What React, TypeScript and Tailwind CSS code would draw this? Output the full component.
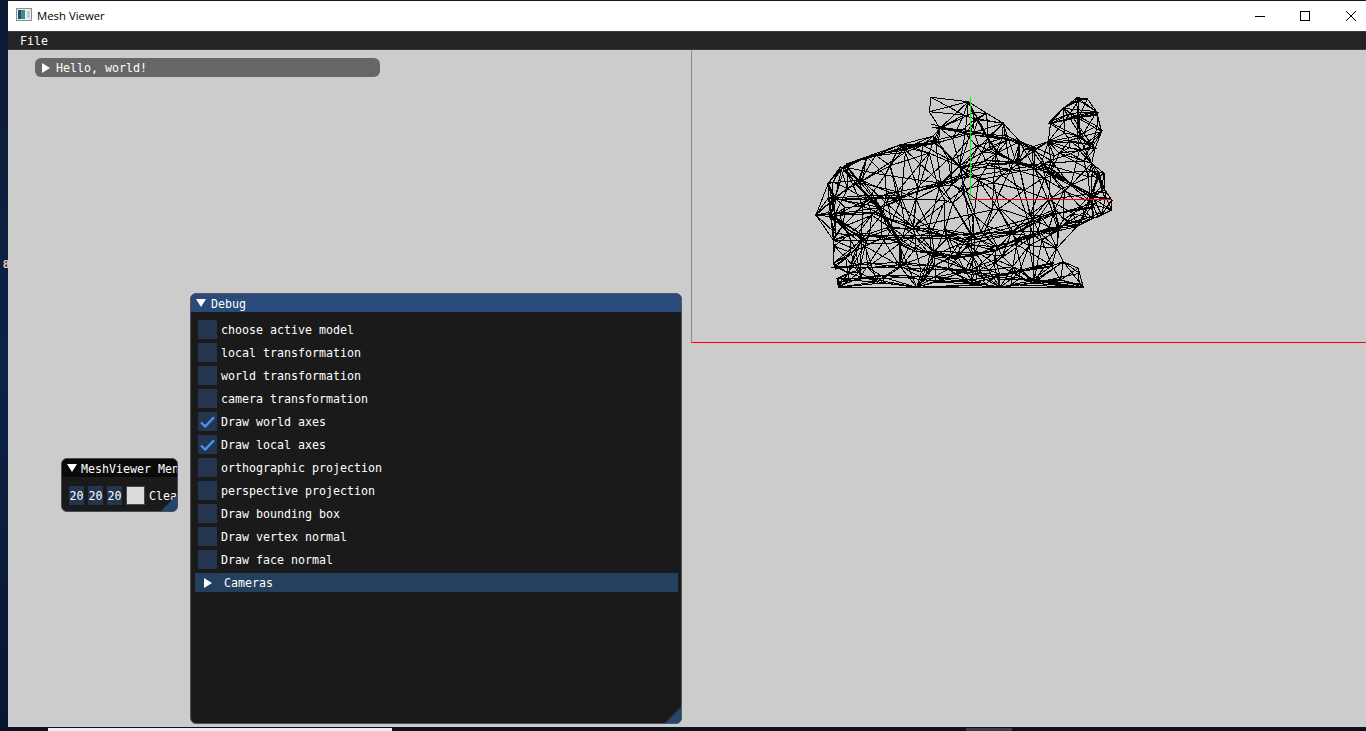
import type { ReactNode } from 'react'

type Pt = [number, number]

// all mesh coords below are read off a 3x crop whose origin is (800,85)
const fromCrop = ([x, y]: Pt): Pt => [800 + x / 3, 85 + y / 3]

const OUTLINE: Pt[] = ([
  [393, 37], [505, 50], [560, 85], [610, 115], [660, 170], [700, 185], [745, 170], [750, 110],
  [790, 70], [832, 38], [862, 42], [890, 80], [905, 140], [885, 190], [875, 235], [912, 265],
  [915, 315], [935, 345], [935, 375], [880, 400], [830, 425], [770, 490], [790, 530], [835, 550],
  [850, 607], [600, 607], [350, 607], [115, 607], [112, 580], [145, 565], [100, 535], [100, 465],
  [48, 390], [85, 295], [125, 250], [200, 215], [300, 180], [400, 153], [420, 130], [388, 80],
] as Pt[]).map(fromCrop)

// the dark bands of the wireframe, where many edges pile up
const BANDS: Pt[][] = [
  [[130, 250], [170, 290], [240, 370], [270, 430], [300, 470], [350, 495], [400, 510], [460, 515], [520, 510], [590, 490], [650, 470], [720, 445], [780, 430], [840, 410], [900, 390]],
  [[100, 550], [200, 540], [300, 540], [400, 550], [500, 560], [600, 575], [700, 590], [840, 600]],
  [[120, 585], [250, 575], [380, 580], [520, 590], [660, 560], [760, 540]],
  [[480, 250], [560, 235], [650, 230], [700, 245], [750, 260], [810, 295], [870, 330]],
  [[140, 240], [220, 210], [310, 195], [400, 170]],
  [[530, 100], [560, 150], [590, 200], [650, 230]],
  [[832, 40], [835, 100], [840, 160], [870, 180]],
  [[895, 270], [905, 300], [915, 330]],
  [[100, 340], [200, 340], [300, 340], [420, 300], [500, 270]],
  [[400, 125], [500, 140], [620, 160], [700, 190]],
  [[750, 110], [830, 95], [895, 90]],
  [[100, 385], [220, 390], [340, 430], [500, 470], [640, 440], [770, 380]],
  [[90, 390], [190, 460], [340, 460], [520, 450], [700, 400], [880, 360]],
].map((band) => (band as Pt[]).map(fromCrop))

function inside([px, py]: Pt) {
  let hit = false
  for (let i = 0, j = OUTLINE.length - 1; i < OUTLINE.length; j = i++) {
    const [xi, yi] = OUTLINE[i]
    const [xj, yj] = OUTLINE[j]
    if (yi > py !== yj > py && px < ((xj - xi) * (py - yi)) / (yj - yi) + xi) hit = !hit
  }
  return hit
}

function seeded(seed: number) {
  let s = seed
  return () => {
    s = (s + 0x6d2b79f5) | 0
    let t = Math.imul(s ^ (s >>> 15), 1 | s)
    t = (t + Math.imul(t ^ (t >>> 7), 61 | t)) ^ t
    return ((t ^ (t >>> 14)) >>> 0) / 4294967296
  }
}

function delaunay(pts: Pt[]) {
  const all: Pt[] = [...pts, [-5000, -5000], [8000, -5000], [1000, 8000]]
  const n = pts.length
  let tris: number[][] = [[n, n + 1, n + 2]]
  const inCircle = (t: number[], p: Pt) => {
    const [a, b, c] = t.map((i) => all[i])
    const ax = a[0] - p[0], ay = a[1] - p[1]
    const bx = b[0] - p[0], by = b[1] - p[1]
    const cx = c[0] - p[0], cy = c[1] - p[1]
    const det =
      (ax * ax + ay * ay) * (bx * cy - cx * by) -
      (bx * bx + by * by) * (ax * cy - cx * ay) +
      (cx * cx + cy * cy) * (ax * by - bx * ay)
    const orient = (b[0] - a[0]) * (c[1] - a[1]) - (b[1] - a[1]) * (c[0] - a[0])
    return orient > 0 ? det > 0 : det < 0
  }
  pts.forEach((p, i) => {
    const bad = tris.filter((t) => inCircle(t, p))
    const edges = new Map<string, [number, number]>()
    bad.forEach((t) => {
      for (let k = 0; k < 3; k++) {
        const a = t[k], b = t[(k + 1) % 3]
        const key = a < b ? `${a}-${b}` : `${b}-${a}`
        if (edges.has(key)) edges.delete(key)
        else edges.set(key, [a, b])
      }
    })
    tris = tris.filter((t) => !bad.includes(t))
    edges.forEach(([a, b]) => tris.push([a, b, i]))
  })
  return tris.filter((t) => t.every((i) => i < n))
}

function layer(seed: number, count: number, bandStep: number) {
  const rand = seeded(seed)
  const pts: Pt[] = [...OUTLINE]
  BANDS.forEach((band) =>
    band.forEach((p, i) => {
      if (i % bandStep === 0) pts.push([p[0] + (rand() - 0.5) * 5, p[1] + (rand() - 0.5) * 5])
    }),
  )
  const base = pts.length
  let guard = 0
  while (pts.length < base + count && guard++ < 4000) {
    const p: Pt = [816 + rand() * 295, 97 + rand() * 190]
    if (inside(p)) pts.push(p)
  }
  let d = ''
  delaunay(pts).forEach(([a, b, c]) => {
    const [pa, pb, pc] = [pts[a], pts[b], pts[c]]
    if (!inside([(pa[0] + pb[0] + pc[0]) / 3, (pa[1] + pb[1] + pc[1]) / 3])) return
    d += `M${pa[0].toFixed(1)} ${pa[1].toFixed(1)}L${pb[0].toFixed(1)} ${pb[1].toFixed(1)}L${pc[0].toFixed(1)} ${pc[1].toFixed(1)}Z`
  })
  return d
}

// loose copies of each band, so they read as bundles of nearly parallel edges
function bundles() {
  const rand = seeded(5)
  let d = ''
  BANDS.forEach((band) => {
    for (let c = 0; c < 3; c++) {
      band.forEach(([x, y], i) => {
        d += `${i ? 'L' : 'M'}${(x + (rand() - 0.5) * 4).toFixed(1)} ${(y + (rand() - 0.5) * 6).toFixed(1)}`
      })
    }
  })
  return d
}

const MESH = [layer(7, 55, 1), layer(23, 50, 2), layer(91, 35, 3), bundles()]

const OPTIONS = [
  { label: 'choose active model' },
  { label: 'local transformation' },
  { label: 'world transformation' },
  { label: 'camera transformation' },
  { label: 'Draw world axes', checked: true },
  { label: 'Draw local axes', checked: true },
  { label: 'orthographic projection' },
  { label: 'perspective projection' },
  { label: 'Draw bounding box' },
  { label: 'Draw vertex normal' },
  { label: 'Draw face normal' },
]

function ArrowRight() {
  return (
    <svg width="8" height="10" viewBox="0 0 8 10" className="shrink-0">
      <polygon points="0,0 8,5 0,10" fill="#fff" />
    </svg>
  )
}

function ArrowDown() {
  return (
    <svg width="10" height="8" viewBox="0 0 10 8" className="shrink-0">
      <polygon points="0,0 10,0 5,8" fill="#fff" />
    </svg>
  )
}

function Grip({ size }: { size: number }) {
  return (
    <svg width={size} height={size} viewBox="0 0 10 10" className="absolute right-0 bottom-0">
      <polygon points="10,0 10,10 0,10" fill="#26456b" />
    </svg>
  )
}

function Checkbox({ label, checked }: { label: string; checked?: boolean }) {
  return (
    <div className="flex h-[19px] items-center gap-[4px]">
      <div className="flex h-[19px] w-[19px] items-center justify-center bg-[#23354f]">
        {checked && (
          <svg width="15" height="12" viewBox="0 0 15 12" fill="none">
            <path d="M1 6.5 L5.2 10.5 L14 1.2" stroke="#4296fa" strokeWidth="2.4" />
          </svg>
        )}
      </div>
      <span className="pt-[3px] text-white">{label}</span>
    </div>
  )
}

function Frame({ children }: { children: ReactNode }) {
  return (
    <div className="flex h-[19px] w-[15px] shrink-0 items-center justify-center bg-[#23354f] pt-[3px] text-white">
      {children}
    </div>
  )
}

export default function App() {
  return (
    <div className="flex h-[731px] w-[1366px] flex-col overflow-hidden bg-[#0a1526] font-['DejaVu_Sans_Mono',monospace] text-[11.63px]">
      <div className="h-px bg-[#0b1a2c]" />

      <div className="flex min-h-0 flex-1">
        {/* desktop peeking out on the left */}
        <div className="relative w-2 bg-gradient-to-b from-[#0a1a33] via-[#0c2347] to-[#071630]">
          <span className="absolute top-[257px] left-[3px] font-['Liberation_Sans',sans-serif] text-[11px] leading-[13px] font-bold text-[#ffc9a8]">
            8
          </span>
        </div>

        <div className="flex min-w-0 flex-1 flex-col">
          {/* title bar */}
          <div className="flex h-[30px] items-center bg-white text-black">
            <svg width="16" height="14" viewBox="0 0 16 14" className="mt-[-2px] ml-2 shrink-0">
              <rect x="0.5" y="0.5" width="15" height="12" fill="#e8eef0" stroke="#8a8f94" />
              <rect x="2" y="2" width="7" height="9" fill="#3f8a8a" />
              <rect x="2" y="2" width="3" height="9" fill="#23506b" />
              <rect x="11" y="3" width="3" height="7" fill="#c3cbd0" />
            </svg>
            <span className="ml-[5px] font-['Open_Sans',sans-serif] text-[11.35px]">Mesh Viewer</span>
            <div className="mr-[10px] ml-auto flex items-center gap-[35px]">
              <div className="h-px w-[10px] bg-black" />
              <div className="h-[10px] w-[10px] border border-black" />
              <svg width="10" height="10" viewBox="0 0 10 10" stroke="#000" strokeWidth="1" className="ml-px">
                <path d="M0 0 L10 10 M10 0 L0 10" />
              </svg>
            </div>
          </div>

          {/* menu bar */}
          <div className="flex h-[19px] items-center border-t border-b border-t-[#3a3a3a] border-b-[#3c3c3c] bg-[#242424] pt-[3px] pl-[12px] text-white">
            File
          </div>

          {/* imgui windows float freely on this canvas */}
          <div className="relative min-h-0 flex-1 bg-[#cccccc]">
            <div className="absolute top-[8px] left-[27px] flex h-[19px] w-[345px] items-center gap-[6px] rounded-[6px] bg-[#666666] pl-[7px] text-white">
              <ArrowRight />
              <span className="pt-[3px]">Hello, world!</span>
            </div>

            <div className="absolute top-0 left-[683px] h-[293px] w-[675px] border-b border-l border-b-[#ff0000] border-l-[#8a8a8a]">
              <svg width="674" height="292" viewBox="692 50 674 292" fill="none" shapeRendering="crispEdges">
                {MESH.map((d, i) => (
                  <path key={i} d={d} stroke="#000" strokeWidth="1" />
                ))}
                <path d="M970.5 97 V199" stroke="#00ff00" strokeWidth="1" />
                <path d="M970 199.5 H1111" stroke="#ff0000" strokeWidth="1" />
              </svg>
            </div>

            <div className="absolute top-[408px] left-[53px] h-[54px] w-[117px] overflow-hidden rounded-[6px] border border-[#4a4a55] bg-[#1a1a1a]">
              <div className="flex h-[18px] items-center gap-[4px] overflow-hidden bg-[#0a0a0a] pl-[5px] whitespace-nowrap text-white">
                <ArrowDown />
                <span className="pt-[3px]">MeshViewer Menu</span>
              </div>
              <div className="mt-[8px] flex items-center gap-[4px] pl-[7px] whitespace-nowrap">
                <Frame>20</Frame>
                <Frame>20</Frame>
                <Frame>20</Frame>
                <div className="h-[19px] w-[19px] shrink-0 border border-[#3b4a5c] bg-[#dcdcdc]" />
                <span className="pt-[3px] text-white">Clear</span>
              </div>
              <Grip size={16} />
            </div>

            <div className="absolute top-[243px] left-[182px] h-[431px] w-[492px] overflow-hidden rounded-[6px] border border-[#55555f] bg-[#1a1a1a]">
              <div className="flex h-[18px] items-center gap-[5px] bg-[#294a7a] pl-[5px] text-white">
                <ArrowDown />
                <span className="pt-[3px]">Debug</span>
              </div>
              <div className="flex flex-col gap-[4px] px-[7px] pt-[8px]">
                {OPTIONS.map((o) => (
                  <Checkbox key={o.label} label={o.label} checked={o.checked} />
                ))}
              </div>
              <div className="mt-[4px] mr-[3px] ml-[4px] flex h-[19px] items-center bg-[#25405f] pl-[9px] text-white">
                <ArrowRight />
                <span className="ml-[12px] pt-[3px]">Cameras</span>
              </div>
              <Grip size={16} />
            </div>
          </div>
        </div>
      </div>

      {/* taskbar sliver */}
      <div className="flex h-[4px] shrink-0 bg-[#0a1320]">
        <div className="mt-px ml-[48px] w-[344px] bg-[#eef0f2]" />
        <div className="mt-px ml-[574px] w-[46px] bg-[#3a4048]" />
      </div>
    </div>
  )
}
